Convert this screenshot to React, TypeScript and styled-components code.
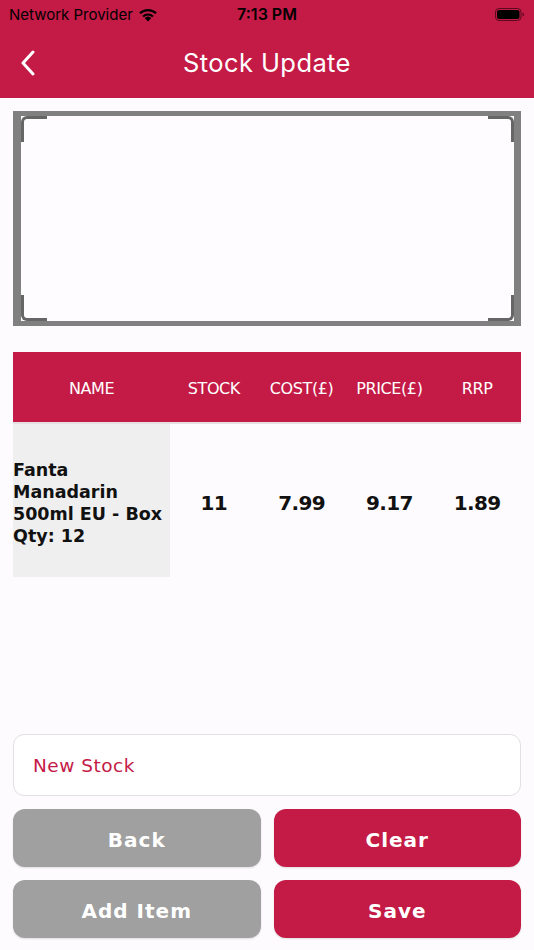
import React from "react";
import styled, { createGlobalStyle } from "styled-components";

const RED = "#C41A46";
const BODY_FONT = `"DejaVu Sans", "Open Sans", sans-serif`;
const SYS_FONT = `"Inter", "Open Sans", "Liberation Sans", sans-serif`;

const Global = createGlobalStyle`
  html, body { margin: 0; padding: 0; background: #FEFBFE; }
  * { box-sizing: border-box; }
`;

const Screen = styled.div`
  width: 534px;
  height: 950px;
  display: flex;
  flex-direction: column;
  background: #FEFBFE;
  overflow: hidden;
`;

const TopBar = styled.div`
  background: ${RED};
  height: 98px;
  display: flex;
  flex-direction: column;
`;

const StatusBar = styled.div`
  height: 28px;
  display: grid;
  grid-template-columns: 1fr auto 1fr;
  align-items: center;
  padding: 0 9px;
  font-family: ${SYS_FONT};
  font-size: 15px;
  color: #000;
`;

const Carrier = styled.div`
  display: flex;
  align-items: center;
  gap: 5px;
`;

const Time = styled.div`
  font-weight: 600;
  font-size: 16px;
`;

const Battery = styled.div`
  justify-self: end;
  display: flex;
  align-items: center;
`;

const NavBar = styled.div`
  flex: 1;
  display: flex;
  align-items: center;
  justify-content: center;
  position: relative;
  padding-bottom: 2px;
`;

const BackBtn = styled.div`
  position: absolute;
  left: 20px;
  top: 22px;
  display: flex;
`;

const Title = styled.div`
  font-family: ${SYS_FONT};
  font-size: 25.5px;
  color: #fff;
  letter-spacing: 0.4px;
`;

const Content = styled.div`
  flex: 1;
  display: flex;
  flex-direction: column;
  padding: 13px 13px 0 13px;
`;

const Scanner = styled.div`
  height: 215px;
  border-style: solid;
  border-color: #808080;
  border-width: 5px 7px 5px 8px;
  background: #FEFCFE;
  position: relative;
`;

const Corner = styled.div<{ $v: "top" | "bottom"; $h: "left" | "right" }>`
  position: absolute;
  width: 26px;
  height: 26px;
  ${(p) => p.$v}: 0;
  ${(p) => p.$h}: 0;
  border-${(p) => p.$v}: 3px solid #666;
  border-${(p) => p.$h}: 3px solid #666;
  border-${(p) => p.$v}-${(p) => p.$h}-radius: 6px;
`;

const Table = styled.div`
  margin-top: 26px;
  display: flex;
  flex-direction: column;
`;

const Row = styled.div<{ $head?: boolean }>`
  display: grid;
  grid-template-columns: 157px 1fr 1fr 1fr 1fr;
  height: ${(p) => (p.$head ? "72px" : "153px")};
  background: ${(p) => (p.$head ? RED : "transparent")};
  border-bottom: ${(p) => (p.$head ? "2px solid #E4E0E2" : "none")};
  font-family: ${BODY_FONT};
`;

const HeadCell = styled.div`
  display: flex;
  align-items: center;
  justify-content: center;
  color: #fff;
  font-size: 16px;
  letter-spacing: -0.4px;
  white-space: nowrap;
  padding-top: 2px;
`;

const NameCell = styled.div`
  background: #EFEFEF;
  display: flex;
  align-items: center;
  font-weight: bold;
  font-size: 17.5px;
  line-height: 22px;
  color: #111;
  letter-spacing: 0px;
  padding-top: 5px;
  white-space: nowrap;
`;

const ValueCell = styled.div`
  display: flex;
  align-items: center;
  justify-content: center;
  font-weight: bold;
  font-size: 20px;
  color: #111;
  letter-spacing: -0.6px;
  padding-top: 4px;
`;

const Spacer = styled.div`
  flex: 1;
`;

const Input = styled.input`
  height: 62px;
  width: 100%;
  border: 1px solid #E2E0E2;
  border-radius: 11px;
  background: #fff;
  padding: 0 19px;
  font-family: ${BODY_FONT};
  font-size: 18.5px;
  letter-spacing: 0.5px;
  outline: none;
  &::placeholder { color: ${RED}; }
`;

const ButtonGrid = styled.div`
  margin-top: 13px;
  display: grid;
  grid-template-columns: 1fr 1fr;
  column-gap: 13px;
  row-gap: 13px;
  margin-bottom: 12px;
`;

const Btn = styled.button<{ $primary?: boolean }>`
  height: 58px;
  border: none;
  border-radius: 12px;
  background: ${(p) => (p.$primary ? RED : "#A0A0A0")};
  color: #fff;
  font-family: ${BODY_FONT};
  font-weight: bold;
  font-size: 20px;
  letter-spacing: 1px;
  box-shadow: 0 1px 2px rgba(0,0,0,0.12);
  padding: 3px 0 0 0;
`;

const WifiIcon = () => (
  <svg width="20" height="15" viewBox="0 0 20 15">
    <path d="M10 14.5 L6.6 11 A5 5 0 0 1 13.4 11 Z" fill="#000" />
    <path d="M4.3 8.7 A8.2 8.2 0 0 1 15.7 8.7 L14.2 10.2 A6.1 6.1 0 0 0 5.8 10.2 Z" fill="#000" />
    <path d="M1.2 5.6 A12.6 12.6 0 0 1 18.8 5.6 L17.3 7.1 A10.5 10.5 0 0 0 2.7 7.1 Z" fill="#000" />
  </svg>
);

const BatteryIcon = () => (
  <svg width="30" height="15" viewBox="0 0 30 15">
    <rect x="0.5" y="1.5" width="25.5" height="12" rx="3.5" fill="none" stroke="#5a0a1f" strokeWidth="1" />
    <rect x="2" y="3" width="22.5" height="9" rx="2" fill="#000" />
    <path d="M27.5 5.5 Q29 6 29 7.5 Q29 9 27.5 9.5 Z" fill="#5a0a1f" />
  </svg>
);

const Chevron = () => (
  <svg width="16" height="26" viewBox="0 0 16 26">
    <path d="M13 2 L3 13 L13 24" fill="none" stroke="#fff" strokeWidth="3" strokeLinecap="round" strokeLinejoin="round" />
  </svg>
);

export default function App() {
  return (
    <Screen>
      <Global />
      <TopBar>
        <StatusBar>
          <Carrier>
            Network Provider <WifiIcon />
          </Carrier>
          <Time>7:13 PM</Time>
          <Battery>
            <BatteryIcon />
          </Battery>
        </StatusBar>
        <NavBar>
          <BackBtn>
            <Chevron />
          </BackBtn>
          <Title>Stock Update</Title>
        </NavBar>
      </TopBar>
      <Content>
        <Scanner>
          <Corner $v="top" $h="left" />
          <Corner $v="top" $h="right" />
          <Corner $v="bottom" $h="left" />
          <Corner $v="bottom" $h="right" />
        </Scanner>
        <Table>
          <Row $head>
            <HeadCell>NAME</HeadCell>
            <HeadCell>STOCK</HeadCell>
            <HeadCell>COST(£)</HeadCell>
            <HeadCell>PRICE(£)</HeadCell>
            <HeadCell>RRP</HeadCell>
          </Row>
          <Row>
            <NameCell>
              Fanta
              <br />
              Manadarin
              <br />
              500ml EU - Box
              <br />
              Qty: 12
            </NameCell>
            <ValueCell>11</ValueCell>
            <ValueCell>7.99</ValueCell>
            <ValueCell>9.17</ValueCell>
            <ValueCell>1.89</ValueCell>
          </Row>
        </Table>
        <Spacer />
        <Input placeholder="New Stock" />
        <ButtonGrid>
          <Btn>Back</Btn>
          <Btn $primary>Clear</Btn>
          <Btn>Add Item</Btn>
          <Btn $primary>Save</Btn>
        </ButtonGrid>
      </Content>
    </Screen>
  );
}
